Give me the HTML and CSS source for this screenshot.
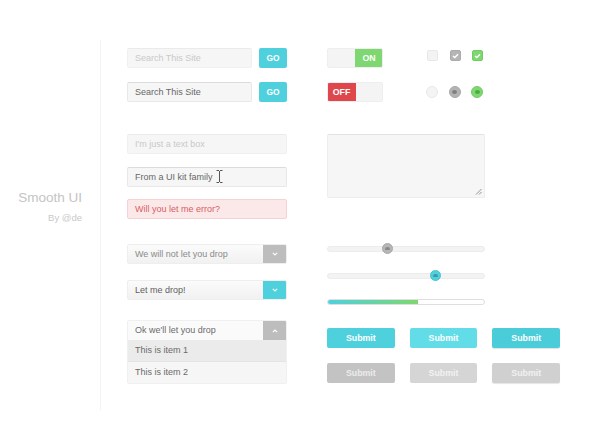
FILE: index.html
```html
<!DOCTYPE html>
<html>
<head>
<meta charset="utf-8">
<link rel="stylesheet" href="styles.css">
</head>
<body>
<div class="page">
  <aside class="sidebar">
    <div class="brand">Smooth UI</div>
    <div class="byline">By @de</div>
  </aside>
  <main class="main">
    <section class="col col-left">
      <div class="search-row">
        <div class="input placeholder search">Search This Site</div>
        <div class="go">GO</div>
      </div>
      <div class="search-row mt14">
        <div class="input filled search">Search This Site</div>
        <div class="go">GO</div>
      </div>

      <div class="text-group">
        <div class="input placeholder">I'm just a text box</div>
        <div class="input filled caret-host">From a UI kit family
          <svg class="ibeam" width="7" height="13" viewBox="0 0 7 13"><path d="M0.5 0.5h2.5M4 0.5h2.5M3.5 1v11M0.5 12.5h2.5M4 12.5h2.5" stroke="#555" stroke-width="1" fill="none"/></svg>
        </div>
        <div class="input error">Will you let me error?</div>
      </div>

      <div class="select">
        <span class="select-label muted">We will not let you drop</span>
        <span class="select-btn grey"><svg width="6" height="4" viewBox="0 0 6 4"><path d="M0.8 0.8L3 3L5.2 0.8" stroke="#fff" stroke-width="1.1" fill="none"/></svg></span>
      </div>
      <div class="select mt16">
        <span class="select-label">Let me drop!</span>
        <span class="select-btn teal"><svg width="6" height="4" viewBox="0 0 6 4"><path d="M0.8 0.8L3 3L5.2 0.8" stroke="#fff" stroke-width="1.1" fill="none"/></svg></span>
      </div>
      <div class="dropdown mt20">
        <div class="select open">
          <span class="select-label">Ok we'll let you drop</span>
          <span class="select-btn grey"><svg width="6" height="4" viewBox="0 0 6 4"><path d="M0.8 3.2L3 1L5.2 3.2" stroke="#fff" stroke-width="1.1" fill="none"/></svg></span>
        </div>
        <div class="item active">This is item 1</div>
        <div class="item">This is item 2</div>
      </div>
    </section>

    <section class="col col-right">
      <div class="ctrl-row">
        <div class="toggle"><span class="toggle-off-space"></span><span class="toggle-on">ON</span></div>
        <div class="checks">
          <span class="check"></span>
          <span class="check grey"><svg width="7" height="6" viewBox="0 0 7 6"><path d="M1 3L2.8 4.6L6 1.2" stroke="#fff" stroke-width="1.4" fill="none"/></svg></span>
          <span class="check green"><svg width="7" height="6" viewBox="0 0 7 6"><path d="M1 3L2.8 4.6L6 1.2" stroke="#fff" stroke-width="1.4" fill="none"/></svg></span>
        </div>
      </div>
      <div class="ctrl-row mt14">
        <div class="toggle"><span class="toggle-off">OFF</span><span class="toggle-off-space"></span></div>
        <div class="radios">
          <span class="radio"></span>
          <span class="radio grey"><span class="dot"></span></span>
          <span class="radio green"><span class="dot"></span></span>
        </div>
      </div>

      <div class="textarea">
        <svg class="grip" width="7" height="7" viewBox="0 0 7 7"><path d="M6.5 1L1 6.5M6.5 4L4 6.5" stroke="#888" stroke-width="0.9"/></svg>
      </div>

      <div class="slider s1">
        <div class="track"></div>
        <span class="thumb grey" style="left: 55px"><span class="thumb-dot"></span></span>
      </div>
      <div class="slider s2">
        <div class="track"></div>
        <span class="thumb teal" style="left: 103px"><span class="thumb-dot"></span></span>
      </div>
      <div class="progress"><div class="progress-fill" style="width: 58%"></div></div>

      <div class="buttons">
        <div class="btn teal">Submit</div>
        <div class="btn teal-light">Submit</div>
        <div class="btn teal-dark">Submit</div>
      </div>
      <div class="buttons mt15">
        <div class="btn grey1">Submit</div>
        <div class="btn grey2">Submit</div>
        <div class="btn grey3">Submit</div>
      </div>
    </section>
  </main>
</div>
</body>
</html>
```

FILE: styles.css
```css
* { box-sizing: border-box; }
html, body { margin: 0; padding: 0; background: #fff; }
body {
  font-family: "Liberation Sans", Arial, sans-serif;
  width: 590px;
  height: 442px;
  overflow: hidden;
}
.page {
  display: flex;
  padding-top: 40px;
}
.sidebar {
  width: 101px;
  height: 370px;
  border-right: 1px solid #f3f3f3;
  padding-top: 150px;
  padding-right: 18px;
  text-align: right;
}
.brand {
  font-size: 13.5px;
  line-height: 16px;
  color: #c4c4c4;
}
.byline {
  margin-top: 6px;
  font-size: 9.5px;
  line-height: 12px;
  color: #c8c8c8;
}
.main {
  display: flex;
  gap: 40px;
  padding-left: 26px;
  padding-top: 8px;
}
.col { display: flex; flex-direction: column; }
.col-left { width: 160px; }
.col-right { width: 233px; }

.mt14 { margin-top: 14px; }
.mt15 { margin-top: 15px; }
.mt16 { margin-top: 16px; }
.mt20 { margin-top: 20px; }

/* inputs */
.search-row { display: flex; gap: 7px; height: 20px; }
.input {
  height: 20px;
  background: #f6f6f6;
  border: 1px solid #efefef;
  border-top-color: #e6e6e6;
  border-radius: 2px;
  padding-left: 7px;
  font-size: 9px;
  line-height: 18px;
  color: #6e6e6e;
  position: relative;
  white-space: nowrap;
}
.input.search { width: 125px; }
.input.placeholder { color: #c9c9c9; border-color: #f0f0f0; border-top-color: #eaeaea; }
.input.filled { color: #666; border-color: #e8e8e8; border-top-color: #dcdcdc; }
.input.error {
  background: #fbe9ea;
  border-color: #f5d3d5;
  color: #d85d63;
}
.go {
  width: 28px;
  height: 20px;
  background: #4fd0dd;
  border-radius: 2px;
  color: #fff;
  font-weight: bold;
  font-size: 8.4px;
  line-height: 20px;
  text-align: center;
}
.text-group {
  margin-top: 32px;
  display: flex;
  flex-direction: column;
  gap: 12.5px;
}
.ibeam {
  position: absolute;
  left: 88px;
  top: 2px;
}

/* selects */
.select {
  margin-top: 25px;
  height: 20px;
  display: flex;
  border: 1px solid #eeeeee;
  border-radius: 2px;
  background: linear-gradient(#fbfbfb, #f1f1f1);
  overflow: hidden;
}
.select.mt16 { margin-top: 16px; }
.select-label {
  flex: 1;
  padding-left: 7px;
  font-size: 9px;
  line-height: 18px;
  color: #5f5f5f;
}
.select-label.muted { color: #8a8a8a; }
.select-btn {
  width: 23px;
  display: flex;
  align-items: center;
  justify-content: center;
}
.select-btn.grey { background: #bdbdbd; }
.select-btn.teal { background: #4fd0dd; }
.dropdown {
  display: flex;
  flex-direction: column;
  border: 1px solid #f0f0f0;
  border-radius: 2px;
  overflow: hidden;
}
.dropdown .select {
  margin-top: 0;
  border: none;
  border-radius: 0;
  height: 19px;
  background: #fafafa;
}
.dropdown .select-label { line-height: 19px; color: #6a6a6a; }
.item {
  height: 21.5px;
  line-height: 21.5px;
  padding-left: 7px;
  font-size: 9px;
  color: #6a6a6a;
  background: #f6f6f6;
}
.item.active { background: #ebebeb; border-bottom: 1px solid #e4e4e4; }

/* toggles */
.ctrl-row { display: flex; align-items: center; height: 20px; }
.toggle {
  width: 56px;
  height: 20px;
  display: flex;
  background: #f4f4f4;
  border: 1px solid #eeeeee;
  border-radius: 2px;
  overflow: hidden;
}
.toggle-off-space { flex: 1; }
.toggle-on, .toggle-off {
  color: #fff;
  font-weight: bold;
  font-size: 8.8px;
  line-height: 20px;
  text-align: center;
}
.toggle-on { background: #7ed770; margin: -1px -1px -1px 0; width: 28px; border-radius: 0 2px 2px 0; }
.toggle-off { background: #e0474d; margin: -1px 0 -1px -1px; width: 29px; border-radius: 2px 0 0 2px; }

.checks {
  display: flex;
  gap: 11.5px;
  margin-left: 44px;
  margin-top: -5px;
}
.check {
  width: 11px;
  height: 11px;
  border-radius: 2px;
  background: #f3f3f3;
  border: 1px solid #e8e8e8;
  display: flex;
  align-items: center;
  justify-content: center;
}
.check.grey { background: #b5b5b5; border-color: #aaaaaa; }
.check.green { background: #7ed770; border-color: #72cc64; }
.radios {
  display: flex;
  gap: 10.5px;
  margin-left: 43px;
}
.radio {
  width: 12px;
  height: 12px;
  border-radius: 50%;
  background: #f4f4f4;
  border: 1px solid #e8e8e8;
  display: flex;
  align-items: center;
  justify-content: center;
}
.radio .dot { width: 5px; height: 4px; border-radius: 50%; }
.radio.grey { background: #b3b3b3; border-color: #a8a8a8; }
.radio.grey .dot { background: #7f7f7f; }
.radio.green { background: #7ed770; border-color: #71cb63; }
.radio.green .dot { background: #4fa845; }

/* textarea */
.textarea {
  margin-top: 32px;
  width: 158px;
  height: 64px;
  background: #f6f6f6;
  border: 1px solid #ededed;
  border-top-color: #e2e2e2;
  border-radius: 2px;
  position: relative;
}
.grip { position: absolute; right: 2px; bottom: 2px; }

/* sliders */
.slider {
  position: relative;
  width: 158px;
  height: 11px;
  display: flex;
  align-items: center;
}
.slider.s1 { margin-top: 45px; }
.slider.s2 { margin-top: 16px; }
.track {
  width: 100%;
  height: 6px;
  border-radius: 3px;
  background: #f3f3f3;
  border: 1px solid #ececec;
}
.thumb {
  position: absolute;
  top: 0;
  width: 11px;
  height: 11px;
  border-radius: 50%;
  display: flex;
  align-items: center;
  justify-content: center;
}
.thumb.grey { background: #b6b6b6; border: 1px solid #a9a9a9; }
.thumb.teal { background: #4fd0dd; border: 1px solid #45c5d2; }
.thumb-dot { width: 5px; height: 3px; border-radius: 3px 3px 1px 1px; background: rgba(0,0,0,0.25); }
.progress {
  margin-top: 18px;
  width: 158px;
  height: 6px;
  border: 1px solid #dedede;
  border-radius: 3px;
  background: #fff;
  overflow: hidden;
}
.progress-fill {
  height: 100%;
  background: linear-gradient(to right, #4fd0dd, #7ed770);
}

/* buttons */
.buttons { display: flex; gap: 15px; margin-top: 23px; }
.buttons.mt15 { margin-top: 15px; }
.btn {
  width: 68px;
  height: 20px;
  border-radius: 2px;
  color: #fff;
  font-weight: bold;
  font-size: 8.8px;
  line-height: 20px;
  text-align: center;
}
.btn.teal { background: #4fd0dd; }
.btn.teal-light { background: #62dce7; }
.btn.teal-dark { background: #4bccd9; box-shadow: 0 1px 1px rgba(0,0,0,0.12); }
.btn.grey1 { background: #c3c3c3; color: #ececec; }
.btn.grey2 { background: #d5d5d5; color: #f2f2f2; }
.btn.grey3 { background: #d0d0d0; color: #f2f2f2; box-shadow: 0 1px 1px rgba(0,0,0,0.1); }
```
